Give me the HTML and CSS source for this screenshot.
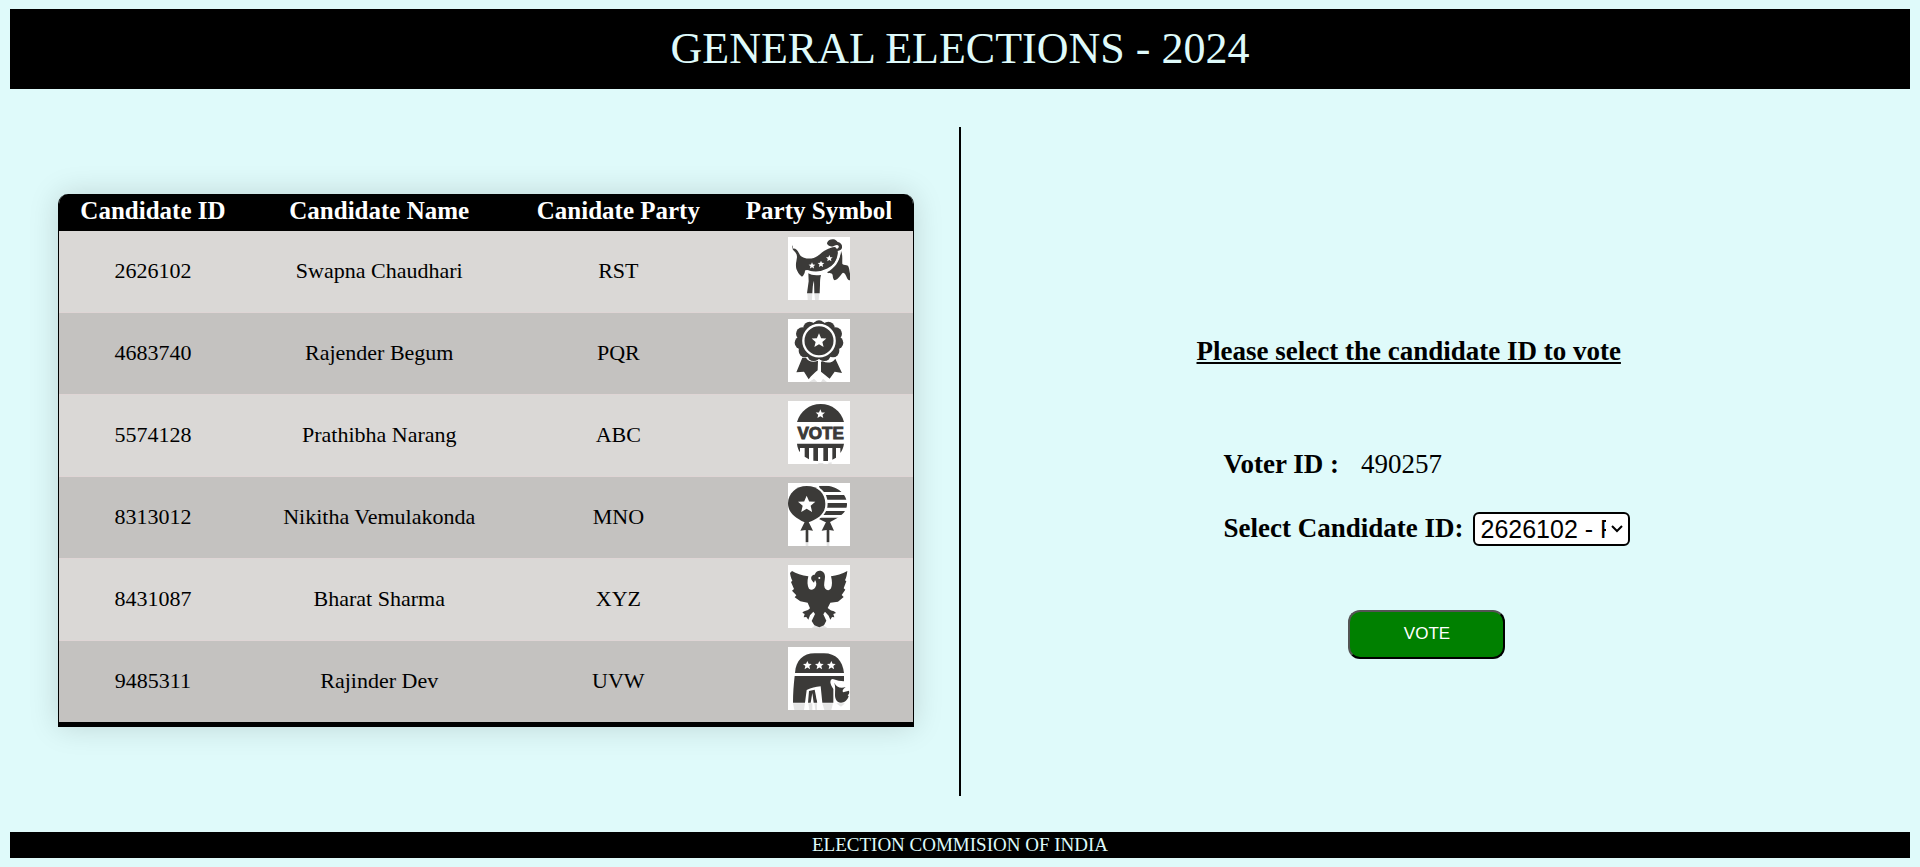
FILE: index.html
```html
<!DOCTYPE html>
<html lang="en">
<head>
<meta charset="utf-8">
<title>General Elections - 2024</title>
<link rel="stylesheet" href="styles.css">
</head>
<body>
<svg class="defs" aria-hidden="true">
  <defs>
    <path id="star" d="M0-10 2.9-3.4 10-3 4.6 1.7 6.3 8.8 0 5-6.3 8.8-4.6 1.7-10-3-2.9-3.4Z"/>
  </defs>
</svg>
<header class="banner">GENERAL ELECTIONS - 2024</header>
<main class="content">
  <section class="list">
    <table class="candidates">
      <colgroup><col class="col-id"><col class="col-name"><col class="col-party"><col class="col-symbol"></colgroup>
      <thead>
        <tr><th>Candidate ID</th><th>Candidate Name</th><th>Canidate Party</th><th>Party Symbol</th></tr>
      </thead>
      <tbody>
        <tr><td>2626102</td><td>Swapna Chaudhari</td><td>RST</td><td>
          <svg class="symbol" viewBox="21 21 186 189" role="img" aria-label="Donkey">
            <path class="shade" d="M79 190h15l-1 20H80zM100 190h15l-2 20h-11z"/>
            <path class="ink" d="M35 56c6-3 14 2 19 14 3 7 7 10 15 13 14 5 29 3 42-6 8-6 15-14 25-18 8-4 16-7 26-8 7 5 10 13 8 22-3 18-10 31-24 41-19 13-43 16-64 8-5-2-9-3-10 1-1 7-3 12-9 17-6-4-11-9-14-17-2-4-4-7-4-14-1-9 2-18 3-28 0-7-3-12-8-17-6-6-9-13-5-18z"/>
            <path class="ink" d="M82 130c8 5 18 7 38 5-3 10-3 20-3 30l-1 25h-16l-1-38c-4 10-4 24-5 38H78l5-36z"/>
            <path class="ink" d="M180 62c6 14 3 28 4 40 5 4 11 3 17 5 4 6 4 14 6 24v20c-4 0-7-3-9-7-3-8-6-15-12-16-4 3-7 8-12 14-4 5-10 10-15 8-5-7-2-14-6-19-5-2-11 0-15-4 26-14 39-36 42-65z"/>
            <path class="line" d="M178 52c-1 30-14 54-38 66-19 10-40 12-62 4" stroke-width="5"/>
            <path class="ink" d="M139 37c3-6 8-9 16-9 8-1 11 4 15 8 10 2 15 10 13 18-3 7-9 9-15 9l-7-5c8-1 14-4 12-10-2-4-8-3-13-1-7 4-14 3-18-1-4-3-5-5-3-9z"/>
            <use class="paper" href="#star" x="93" y="107"/><use class="paper" href="#star" x="120" y="102"/><use class="paper" href="#star" x="145" y="85"/>
          </svg></td></tr>
        <tr><td>4683740</td><td>Rajender Begum</td><td>PQR</td><td>
          <svg class="symbol" viewBox="21 21 186 189" role="img" aria-label="Rosette">
            <path class="shade" d="M84 210l15-10 10 10zM126 200l12 10h-18z"/>
            <path class="ink" d="M64 137l-18 44 23-2 14 23c8-11 19-20 27-27l1-29c-15 6-29 3-36-9zM120 149v30l26 21 15-21 22 4-20-43c-8 12-23 15-38 8z"/>
            <g class="ink"><circle cx="114" cy="86" r="56"/><circle cx="114" cy="44" r="19"/><circle cx="86" cy="48" r="19"/><circle cx="64" cy="65" r="19"/><circle cx="60" cy="92" r="19"/><circle cx="72" cy="117" r="19"/><circle cx="98" cy="128" r="19"/><circle cx="130" cy="128" r="19"/><circle cx="156" cy="117" r="19"/><circle cx="168" cy="92" r="19"/><circle cx="164" cy="65" r="19"/><circle cx="142" cy="48" r="19"/></g>
            <circle class="line" cx="114" cy="86" r="47" stroke-width="7"/>
            <use class="paper" href="#star" transform="translate(114 86) scale(2.2)"/>
          </svg></td></tr>
        <tr><td>5574128</td><td>Prathibha Narang</td><td>ABC</td><td>
          <svg class="symbol" viewBox="21 21 186 189" role="img" aria-label="Vote badge">
            <path class="ink" d="M48 84C58 51 85 30 119 30s61 21 70 54z"/>
            <use class="paper" href="#star" transform="translate(118 60) scale(1.4)"/>
            <text class="ink badge" x="119" y="136" text-anchor="middle">VOTE</text>
            <path class="ink" d="M48 149h141c-2 11-5 20-11 28v-15h-13v29l-11 6v-35h-13v39h-14v-39h-16v39l-14-1v-38H84v34l-13-8v-26H57v13c-5-8-8-16-9-26z"/>
            <path class="shade" d="M112 207h15v3h-15zM142 206l10-1v5h-10z"/>
          </svg></td></tr>
        <tr><td>8313012</td><td>Nikitha Vemulakonda</td><td>MNO</td><td>
          <svg class="symbol" viewBox="21 21 186 189" role="img" aria-label="Balloons">
            <clipPath id="balloon"><path d="M114 30c49-7 84 20 84 54 0 28-25 40-52 55h-12l-20-10c28-24 34-62 2-92z"/></clipPath>
            <g clip-path="url(#balloon)"><path class="ink" d="M100 29h100v19H100zM100 57h100v14H100zM100 81h100v14H100zM100 105h100v12H100zM100 125h100v16H100z"/></g>
            <path class="paper" d="M77 25c38 0 63 24 63 58 0 29-22 49-51 58l-13-5z"/>
            <path class="ink" d="M77 30c34 0 56 23 56 54 0 27-18 43-50 55H71C40 125 21 108 21 82c0-30 25-52 56-52z"/>
            <path class="ink" d="M71 138h12l13 26-14-2v37h-8v-37l-16 2zM135 138h12l12 26-14-2v37h-8v-37l-15 2z"/>
            <path class="shade" d="M74 201h8v9h-8zM137 201h8v9h-8z"/>
            <use class="paper" href="#star" transform="translate(77 85) scale(2.6)"/>
          </svg></td></tr>
        <tr><td>8431087</td><td>Bharat Sharma</td><td>XYZ</td><td>
          <svg class="symbol" viewBox="21 21 186 189" role="img" aria-label="Eagle">
            <path class="shade" d="M94 208l11-6h20l12 6v2H94z"/>
            <path class="ink" d="M33 39c12 8 29 13 49 16-4 15-3 29 2 37 5 5 15 4 19-4 5-8 3-17-1-22l-3 8c-9-7-10-14-7-19 3-4 6-5 9-5 3-8 8-12 15-12 10 0 16 7 16 18 0 11-5 23-1 33 4 9 15 10 19 2 4-9 4-22 0-36 17-3 33-7 49-16-1 10-3 20-7 28l4 3-8 21 5 4-11 16 6 6-17 14-23 3-8 16 9 7c5 2 11 2 16 8l-8 3 3 10-7-1-5 8-5-12-11-12-5 8 9 19-7 14-14 6-15-6-8-13 10-21-5-7-10 11-5 13-6-8-8 1 3-10-7-4c5-6 11-5 17-8l6-5-7-17-22-4-17-12 5-6-13-14 6-5-9-21 4-4c-4-7-6-16-7-23z"/>
            <circle class="paper" cx="115" cy="60" r="3"/>
          </svg></td></tr>
        <tr><td>9485311</td><td>Rajinder Dev</td><td>UVW</td><td>
          <svg class="symbol" viewBox="21 21 186 189" role="img" aria-label="Elephant">
            <path class="shade" d="M36 190h36l-3 20H40zM82 190h12v20h-9zM100 190h8v20h-5zM124 190h32l-5 20h-21zM166 190h26l-12 10z"/>
            <path class="ink" d="M42 99c2-37 24-59 59-59h28c36 0 56 23 60 59z"/>
            <path class="ink" d="M41 108h148v16l-16-2-18-5c-7 1-8 8-6 14 2 8 6 11 8 16v41h-33l-5-49c-16 2-28 4-42 11l-5 38H36c0-28 2-54 5-80z"/>
            <path class="ink" d="M84 153l17-4 8 39H98l-4-29-5 29h-8z"/>
            <path class="ink" d="M160 128c6 13 18 18 34 13-8 6-11 11-8 16l18-5c2 6 0 11-4 14l3 3c-4 12-13 19-23 19-13 0-18-12-18-22 0-14 2-25-2-38z"/>
            <path class="paper" d="M104 149l4-1 6 40h-5z"/>
            <use class="paper" href="#star" transform="translate(79 76) scale(1.3)"/><use class="paper" href="#star" transform="translate(115 76) scale(1.3)"/><use class="paper" href="#star" transform="translate(151 76) scale(1.3)"/>
          </svg></td></tr>
      </tbody>
    </table>
  </section>
  <section class="vote">
    <div class="panel">
      <h1 class="prompt">Please select the candidate ID to vote</h1>
      <form class="ballot">
        <div class="voter"><b>Voter ID :</b><span>490257</span></div>
        <div class="choice">
          <label for="candidate">Select Candidate ID:</label>
          <div class="picker">
            <select id="candidate" class="picker-select">
              <option>2626102 - RST</option><option>4683740 - PQR</option><option>5574128 - ABC</option>
              <option>8313012 - MNO</option><option>8431087 - XYZ</option><option>9485311 - UVW</option>
            </select>
            <svg class="chevron" viewBox="0 0 12 8" aria-hidden="true"><path d="M1 1l5 5 5-5"/></svg>
          </div>
        </div>
        <button class="submit" type="button">VOTE</button>
      </form>
    </div>
  </section>
</main>
<footer class="footer">ELECTION COMMISION OF INDIA</footer>
</body>
</html>
```
FILE: styles.css
```css
* { box-sizing: border-box; }

body {
  display: flex;
  flex-direction: column;
  min-height: 100vh;
  margin: 0;
  padding: 9px 10px;
  background: #dffafa;
  color: #000;
  font-family: "Liberation Serif", "Times New Roman", serif;
}

.defs { position: absolute; width: 0; height: 0; }

.banner {
  padding: 14px;
  background: #000;
  color: #dffafa;
  font-size: 44px;
  line-height: 52px;
  text-align: center;
}

.content {
  flex: 1;
  display: grid;
  grid-template-columns: 1fr 1fr;
  margin: 38px 0 36px;
}

.list {
  display: flex;
  align-items: center;
  padding: 0 45px 2px 48px;
  border-right: 2px solid #000;
  margin-right: -1px;
}

.candidates {
  width: 100%;
  table-layout: fixed;
  border-collapse: separate;
  border-spacing: 0;
  border: 1px solid #000;
  border-top: 0;
  border-bottom: 5px solid #000;
  border-radius: 10px 10px 0 0;
  overflow: hidden;
  box-shadow: 0 0 30px rgba(0, 0, 0, 0.15);
  font-size: 22px;
  text-align: center;
}

.col-id { width: 22%; }
.col-name { width: 31%; }
.col-party { width: 25%; }
.col-symbol { width: 22%; }

.candidates th {
  height: 37px;
  padding: 0 0 4px;
  background: #000;
  color: #fff;
  font-size: 25px;
  line-height: 28px;
}

.candidates td {
  height: 82px;
  padding: 5px 0 7px;
  background: #dad8d6;
  border-bottom: 1px solid #dfd5d5;
}

.candidates tr:nth-child(even) td { background: #c4c2c0; }
.candidates tr:last-child td { height: 81px; border-bottom: 0; }

.symbol {
  display: block;
  width: 62px;
  height: 63px;
  margin: 0 auto 4px;
  background: #fff;
}

.ink { fill: #3b3a38; }
.paper { fill: #fff; }
.shade { fill: #e4e4e4; }
.line { fill: none; stroke: #fff; }

.badge {
  font: bold 51px "Liberation Sans", Arial, sans-serif;
  stroke: #3b3a38;
  stroke-width: 3px;
}

.vote {
  display: flex;
  align-items: center;
  justify-content: center;
  padding: 71px 43px 0 0;
  font-size: 27px;
}

.panel { display: flex; flex-direction: column; gap: 82px; }

.prompt {
  margin: 0;
  font-size: 27px;
  line-height: 31px;
  text-decoration: underline;
}

.ballot {
  display: flex;
  flex-direction: column;
  padding-left: 27px;
}

.voter {
  display: flex;
  gap: 22px;
  margin-bottom: 32px;
  line-height: 31px;
}

.choice {
  display: flex;
  align-items: center;
  gap: 10px;
  margin-bottom: 64px;
}

.choice label { font-weight: bold; }

.picker { position: relative; }

.picker-select {
  display: block;
  width: 157px;
  height: 34px;
  padding: 0 22px 0 5px;
  appearance: none;
  border: 2px solid #000;
  border-radius: 6px;
  background: #fff;
  color: #000;
  font-family: "Liberation Sans", Arial, sans-serif;
  font-size: 25px;
}

.chevron {
  position: absolute;
  top: 13px;
  right: 7px;
  width: 12px;
  height: 8px;
  fill: none;
  stroke: #000;
  stroke-width: 2px;
  pointer-events: none;
}

.submit {
  align-self: center;
  width: 157px;
  height: 49px;
  border: 2px outset #000;
  border-radius: 12px;
  background: #008000;
  color: #fff;
  font-family: "Liberation Sans", Arial, sans-serif;
  font-size: 17px;
}

.footer {
  background: #000;
  color: #dffafa;
  font-size: 19px;
  line-height: 26px;
  text-align: center;
}
```
